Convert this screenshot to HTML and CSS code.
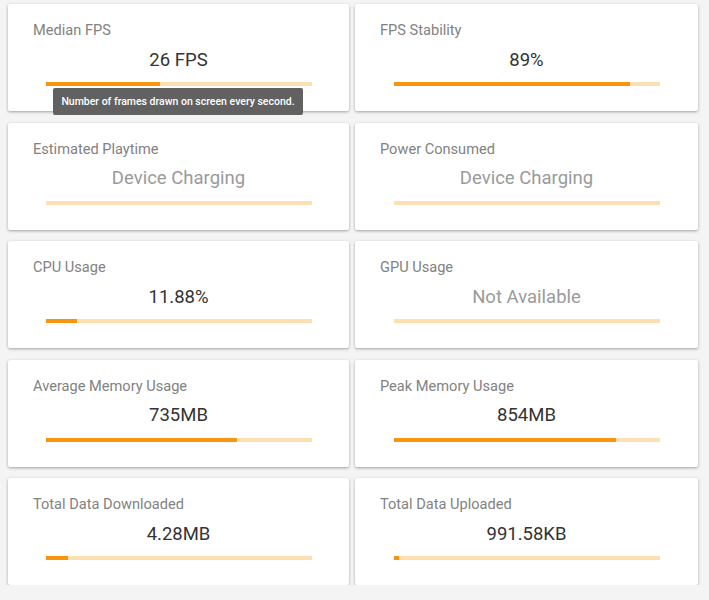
FILE: index.html
```html
<!DOCTYPE html>
<html lang="en">
<head>
  <meta charset="UTF-8">
  <meta name="viewport" content="width=device-width, initial-scale=1.0">
  <title>Session Stats</title>
  <link rel="stylesheet" href="styles.css">
</head>
<body>
  <div class="grid">
    <div class="card">
      <div class="label">Median FPS</div>
      <div class="value">26 FPS</div>
      <div class="bar"><div class="fill" style="width: 43%"></div></div>
      <div class="tooltip">Number of frames drawn on screen every second.</div>
    </div>
    <div class="card">
      <div class="label">FPS Stability</div>
      <div class="value">89%</div>
      <div class="bar"><div class="fill" style="width: 89%"></div></div>
    </div>
    <div class="card">
      <div class="label">Estimated Playtime</div>
      <div class="value muted">Device Charging</div>
      <div class="bar"></div>
    </div>
    <div class="card">
      <div class="label">Power Consumed</div>
      <div class="value muted">Device Charging</div>
      <div class="bar"></div>
    </div>
    <div class="card">
      <div class="label">CPU Usage</div>
      <div class="value">11.88%</div>
      <div class="bar"><div class="fill" style="width: 12%"></div></div>
    </div>
    <div class="card">
      <div class="label">GPU Usage</div>
      <div class="value muted">Not Available</div>
      <div class="bar"></div>
    </div>
    <div class="card">
      <div class="label">Average Memory Usage</div>
      <div class="value">735MB</div>
      <div class="bar"><div class="fill" style="width: 72%"></div></div>
    </div>
    <div class="card">
      <div class="label">Peak Memory Usage</div>
      <div class="value">854MB</div>
      <div class="bar"><div class="fill" style="width: 83.5%"></div></div>
    </div>
    <div class="card">
      <div class="label">Total Data Downloaded</div>
      <div class="value">4.28MB</div>
      <div class="bar"><div class="fill" style="width: 8.3%"></div></div>
    </div>
    <div class="card">
      <div class="label">Total Data Uploaded</div>
      <div class="value">991.58KB</div>
      <div class="bar"><div class="fill" style="width: 2%"></div></div>
    </div>
  </div>
</body>
</html>
```

FILE: styles.css
```css
body {
  font-family: Roboto, "Liberation Sans", sans-serif;
  margin: 0;
  padding: 0;
  background-color: #f4f4f4;
}
.grid {
  display: grid;
  grid-template-columns: 341px 343px;
  grid-auto-rows: 107px;
  column-gap: 6px;
  row-gap: 11.5px;
  padding: 4px 11px 0 8px;
}
.card {
  position: relative;
  background-color: #fff;
  border-radius: 2px;
  box-shadow: 0 1px 3px rgba(0, 0, 0, 0.35);
  padding: 18px 25px 0 25px;
}
.label {
  font-size: 14.6px;
  line-height: 16px;
  color: #828282;
}
.value {
  margin-top: 10.5px;
  font-size: 18.5px;
  line-height: 22px;
  text-align: center;
  color: #333;
}
.value.muted {
  color: #9a9a9a;
}
.bar {
  width: 266px;
  height: 4px;
  margin: 11.5px auto 0;
  background-color: #fde0b2;
}
.fill {
  height: 100%;
  background-color: #f8940d;
}
.tooltip {
  position: absolute;
  left: 45px;
  top: 84px;
  width: 250px;
  height: 27px;
  line-height: 27px;
  z-index: 2;
  background-color: #616161;
  color: #fff;
  font-size: 10.5px;
  font-weight: 500;
  text-align: center;
  border-radius: 2px;
}
```
